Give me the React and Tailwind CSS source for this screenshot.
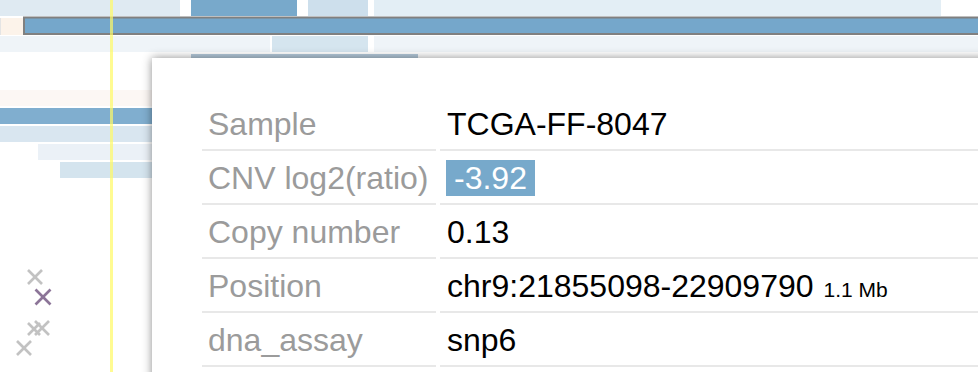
const rows = [
  { label: "Sample", value: "TCGA-FF-8047" },
  { label: "CNV log2(ratio)", value: "-3.92", badge: true },
  { label: "Copy number", value: "0.13" },
  { label: "Position", value: "chr9:21855098-22909790", extra: "1.1 Mb" },
  { label: "dna_assay", value: "snp6" },
];

function Cross({ x, y, s = 7, color }) {
  return (
    <g stroke={color} strokeWidth="2.6">
      <line x1={x - s} y1={y - s} x2={x + s} y2={y + s} />
      <line x1={x - s} y1={y + s} x2={x + s} y2={y - s} />
    </g>
  );
}

function Tracks() {
  return (
    <svg width="978" height="372" className="block">
      {/* top track rows */}
      <rect x="0" y="0" width="180" height="16" fill="#dfeaf2" />
      <rect x="191" y="0" width="106" height="16" fill="#78a9cb" />
      <rect x="308" y="0" width="60" height="16" fill="#cddfec" />
      <rect x="374" y="0" width="567" height="16" fill="#e3eef5" />

      <rect x="0" y="18" width="1" height="17" fill="#e4e4e4" />
      <rect x="1" y="18" width="22" height="17" fill="#fcf3ea" />
      <rect x="24" y="17.5" width="960" height="16.5" fill="#75a7cb" stroke="#808080" strokeWidth="2" />

      <rect x="0" y="36" width="270" height="16" fill="#eff4f8" />
      <rect x="272" y="36" width="96" height="16" fill="#d5e5ef" />
      <rect x="374" y="36" width="604" height="16" fill="#eff4f8" />

      <rect x="191" y="54" width="227" height="10" fill="#b5cadb" />

      {/* left rows */}
      <rect x="0" y="90" width="978" height="16" fill="#fcf7f4" />
      <rect x="0" y="108" width="978" height="16" fill="#80aecf" />
      <rect x="0" y="126" width="978" height="16" fill="#d9e6f0" />
      <rect x="38" y="144" width="940" height="16" fill="#ebf1f7" />
      <rect x="60" y="162" width="918" height="16" fill="#d4e4ee" />

      {/* markers */}
      <Cross x={35} y={277} s={7} color="#c2c2c2" />
      <Cross x={43} y={297} s={7.5} color="#8c7598" />
      <Cross x={34} y={329} s={6} color="#c2c2c2" />
      <Cross x={42} y={328} s={7} color="#c2c2c2" />
      <Cross x={24} y={348} s={7} color="#c2c2c2" />

      {/* cursor line */}
      <rect x="110" y="0" width="3" height="372" fill="rgba(255,250,100,0.7)" />
    </svg>
  );
}

export default function App() {
  return (
    <div className="relative w-[978px] h-[372px] overflow-hidden bg-white font-['Liberation_Sans',Arial,sans-serif]">
      <Tracks />
      <div className="absolute left-[152px] top-[58px] right-[-20px] bottom-[-20px] bg-white shadow-[0_0_9px_rgba(0,0,0,0.45)] pl-[50px] pt-[39px]">
        {rows.map((r) => (
          <div key={r.label} className="flex gap-[4px] h-[54px] text-[32px] leading-[36px]">
            <div className="w-[234px] shrink-0 border-b-2 border-[#e8e8e8] pl-[6px] pt-[9px] text-[#9b9b9b] whitespace-nowrap">
              {r.label}
            </div>
            <div className="flex-1 border-b-2 border-[#e8e8e8] pl-[6px] pt-[9px] text-black whitespace-nowrap">
              {r.badge ? (
                <span className="bg-[#77a9cb] text-white px-[8px]">{r.value}</span>
              ) : (
                <span className="pl-[1px]">{r.value}</span>
              )}
              {r.extra && <span className="ml-[10px] text-[21px]">{r.extra}</span>}
            </div>
          </div>
        ))}
      </div>
    </div>
  );
}
